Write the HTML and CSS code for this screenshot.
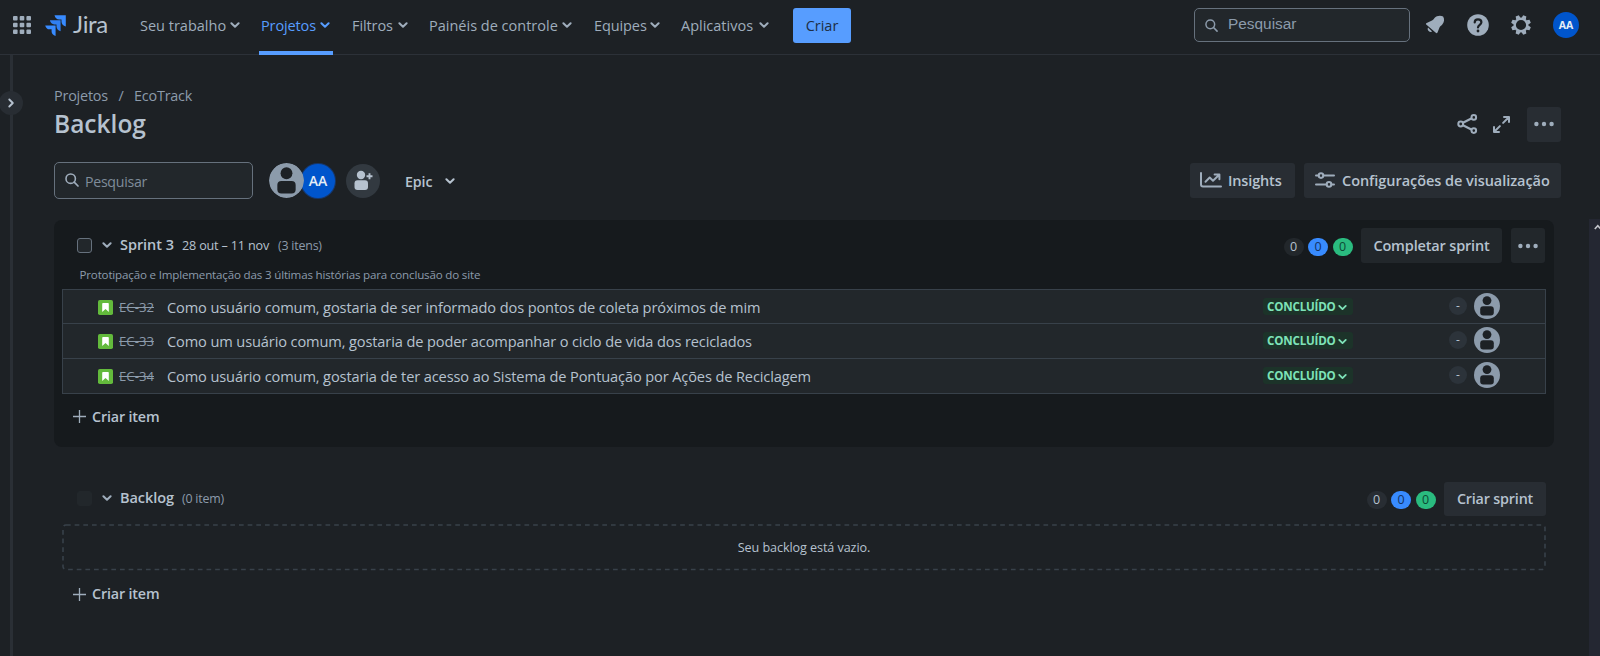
FILE: index.html
```
<!DOCTYPE html>
<html lang="pt-BR">
<head>
<meta charset="utf-8">
<title>Backlog - Jira</title>
<link rel="stylesheet" href="styles.css">
</head>
<body>
<svg width="0" height="0" class="defs" aria-hidden="true">
  <symbol id="chev" viewBox="0 0 10 10"><path d="M1.4 3.2 5 6.8l3.6-3.6" fill="none" stroke="currentColor" stroke-width="2" stroke-linecap="round" stroke-linejoin="round"/></symbol>
  <symbol id="search" viewBox="0 0 14 14"><circle cx="5.7" cy="5.7" r="4.7" fill="none" stroke="currentColor" stroke-width="1.6"/><path d="m9.2 9.2 3.8 3.8" stroke="currentColor" stroke-width="1.7" stroke-linecap="round"/></symbol>
  <symbol id="dots" viewBox="0 0 20 6"><circle cx="2.4" cy="3" r="2.2" fill="currentColor"/><circle cx="10" cy="3" r="2.2" fill="currentColor"/><circle cx="17.6" cy="3" r="2.2" fill="currentColor"/></symbol>
  <symbol id="plus" viewBox="0 0 13 13"><path d="M6.5 0v13M0 6.5h13" stroke="currentColor" stroke-width="1.3"/></symbol>
  <symbol id="person" viewBox="0 0 26 26"><circle cx="13" cy="13" r="13" fill="#8c9bab"/><circle cx="13" cy="7.6" r="4.4" fill="#1d2125"/><rect x="6.2" y="13.3" width="13.6" height="9.3" rx="3" fill="#1d2125"/></symbol>
  <symbol id="story" viewBox="0 0 15 15"><rect width="15" height="15" rx="1.8" fill="#63ba3c"/><path d="M4.2 3.8c0-.5.4-.8.8-.8h5c.5 0 .8.3.8.8V12L7.5 8.9 4.2 12z" fill="#fff"/></symbol>
</svg>

<header class="top">
  <svg class="apps" width="18" height="18" viewBox="0 0 18 18" fill="currentColor"><rect width="4.6" height="4.6" rx="1"/><rect x="6.7" width="4.6" height="4.6" rx="1"/><rect x="13.4" width="4.6" height="4.6" rx="1"/><rect y="6.7" width="4.6" height="4.6" rx="1"/><rect x="6.7" y="6.7" width="4.6" height="4.6" rx="1"/><rect x="13.4" y="6.7" width="4.6" height="4.6" rx="1"/><rect y="13.4" width="4.6" height="4.6" rx="1"/><rect x="6.7" y="13.4" width="4.6" height="4.6" rx="1"/><rect x="13.4" y="13.4" width="4.6" height="4.6" rx="1"/></svg>
  <svg class="mark" width="21" height="21" viewBox="0 0 21 21" fill="#388bff">
    <path d="M9.500.200h11.300v11.200c-2.600-.6-4.300-2.300-4.300-4.600V4.500h-2.300c-2.400 0-4.200-1.700-4.700-4.300z"/>
    <path d="M4.900 5.300h10.700v10.900c-2.500-.6-4.100-2.300-4.100-4.600V9.400H9.300c-2.200 0-3.900-1.600-4.400-4.100z" fill="#307ff2"/>
    <path d="M.200 10.400h10.400v10.500c-2.400-.6-4-2.300-4-4.500v-2.100H4.500c-2.200 0-3.800-1.500-4.300-3.900z"/>
  </svg>
  <span class="brand">Jira</span>
  <nav class="nav">
    <a class="n1"><span>Seu trabalho</span><svg class="chev"><use href="#chev"/></svg></a>
    <a class="n2 on"><span>Projetos</span><svg class="chev"><use href="#chev"/></svg></a>
    <a class="n3"><span>Filtros</span><svg class="chev"><use href="#chev"/></svg></a>
    <a class="n4"><span>Painéis de controle</span><svg class="chev"><use href="#chev"/></svg></a>
    <a class="n5"><span>Equipes</span><svg class="chev"><use href="#chev"/></svg></a>
    <a class="n6"><span>Aplicativos</span><svg class="chev"><use href="#chev"/></svg></a>
  </nav>
  <button class="create">Criar</button>
  <div class="tools">
    <div class="gsearch"><svg width="13" height="13"><use href="#search"/></svg><span>Pesquisar</span></div>
    <svg class="bell" width="20" height="20" viewBox="0 0 20 20"><path d="M1.200 9.600C.7 9 1 8.200 1.700 7.900L7 5.600c1-.4 1.800-1.500 2.500-2.500 2-2.500 6-3 8.600-1.600 1.600 2.300 1.200 6-1 8.200-1 .9-2.100 1.700-2.600 2.700l-2 5c-.3.800-1.100 1-1.700.4z" fill="currentColor"/><path d="M3 12.500c-.6 1.300-.3 2.600.6 3.500s2.300 1.200 3.500.6z" fill="currentColor"/></svg>
    <svg class="help" width="22" height="22" viewBox="0 0 22 22"><circle cx="11" cy="11" r="10.800" fill="currentColor"/><path d="M7.700 8.500C7.700 6.500 9.100 5.300 11 5.300s3.400 1.200 3.400 3c0 2.500-3.400 2.600-3.400 5.200" fill="none" stroke="#1d2125" stroke-width="2.200" stroke-linecap="round"/><circle cx="11" cy="17" r="1.400" fill="#1d2125"/></svg>
    <svg class="gear" width="20" height="20" viewBox="-10 -10 20 20"><circle r="6.300" fill="none" stroke="currentColor" stroke-width="2.400"/><g fill="currentColor"><path id="tooth" d="M-2.300-7-1.700-9.900h3.400L2.300-7z" transform="rotate(22.500)"/><use href="#tooth" transform="rotate(45)"/><use href="#tooth" transform="rotate(90)"/><use href="#tooth" transform="rotate(135)"/><use href="#tooth" transform="rotate(180)"/><use href="#tooth" transform="rotate(225)"/><use href="#tooth" transform="rotate(270)"/><use href="#tooth" transform="rotate(315)"/></g></svg>
    <span class="me">AA</span>
  </div>
</header>

<div class="body">
  <aside class="rail"><span class="expand"><svg width="10" height="10" viewBox="0 0 10 10"><path d="m3.300 1.500 3.500 3.500-3.500 3.500" fill="none" stroke="currentColor" stroke-width="1.900" stroke-linecap="round" stroke-linejoin="round"/></svg></span></aside>
  <main class="main">
    <div class="crumbs"><span>Projetos</span><i>/</i><span>EcoTrack</span></div>
    <div class="titlebar">
      <h1>Backlog</h1>
      <div class="acts">
        <svg width="21" height="20" viewBox="0 0 21 20" fill="none" stroke="currentColor" stroke-width="2"><path d="m6 8.700 8.300-4.300M6 11.300l8.300 4.300" stroke-width="2.200"/><circle cx="3.700" cy="10" r="2.400"/><circle cx="16.800" cy="3.400" r="2.300"/><circle cx="16.800" cy="16.600" r="2.300"/></svg>
        <svg class="full" width="19" height="19" viewBox="0 0 19 19" fill="none" stroke="currentColor" stroke-width="2" stroke-linecap="round" stroke-linejoin="round"><path d="M12 2h5v5M16.300 2.700l-5.200 5.200M2 12v5h5M2.700 16.300l5.200-5.200"/></svg>
        <button class="sq"><svg width="20" height="6"><use href="#dots"/></svg></button>
      </div>
    </div>
    <div class="filters">
      <div class="psearch"><svg width="14" height="14"><use href="#search"/></svg><span>Pesquisar</span></div>
      <svg class="av1" width="35" height="35"><use href="#person"/></svg>
      <span class="av2">AA</span>
      <span class="add"><svg width="22" height="22" viewBox="0 0 22 22" fill="#b6c2cf"><circle cx="9" cy="5" r="4.200"/><rect x="2.500" y="10.300" width="13.500" height="9.800" rx="3"/><path d="M17.500 3.300v6M14.500 6.300h6" stroke="#b6c2cf" stroke-width="1.900"/></svg></span>
      <span class="epic">Epic</span><svg class="chev"><use href="#chev"/></svg>
      <button class="btn insights"><svg width="22" height="16" viewBox="0 0 22 16" fill="none" stroke="currentColor" stroke-width="2" stroke-linecap="round" stroke-linejoin="round"><path d="M1 1v11.500a2 2 0 0 0 2 2h18"/><path d="m5.500 9.700 4.200-4.200 3.300 3.200 5.700-5.400M14.600 2.600h4.800v4.600"/></svg><span>Insights</span></button>
      <button class="btn config"><svg width="20" height="16" viewBox="0 0 20 16" fill="none" stroke="currentColor" stroke-width="2" stroke-linecap="round"><path d="M1 3.600h2.500M8.500 3.600H19M1 12.400h10.500M16.500 12.400H19"/><circle cx="6" cy="3.600" r="2.300"/><circle cx="14" cy="12.400" r="2.300"/></svg><span>Configurações de visualização</span></button>
    </div>

    <section class="panel">
      <div class="head">
        <i class="check"></i><svg class="chev"><use href="#chev"/></svg>
        <b>Sprint 3</b><span class="date">28 out – 11 nov</span><span class="count">(3 itens)</span>
        <div class="right"><span class="badge">0</span><span class="badge blue">0</span><span class="badge green">0</span>
        <button class="btn complete">Completar sprint</button><button class="sq"><svg width="20" height="6"><use href="#dots"/></svg></button></div>
      </div>
      <p class="goal">Prototipação e Implementação das 3 últimas histórias para conclusão do site</p>
      <ul class="list">
        <li><svg class="story"><use href="#story"/></svg><s>EC-32</s><span class="sum">Como usuário comum, gostaria de ser informado dos pontos de coleta próximos de mim</span><span class="status"><span>CONCLUÍDO</span><svg><use href="#chev"/></svg></span><em>-</em><svg class="pav"><use href="#person"/></svg></li>
        <li><svg class="story"><use href="#story"/></svg><s>EC-33</s><span class="sum">Como um usuário comum, gostaria de poder acompanhar o ciclo de vida dos reciclados</span><span class="status"><span>CONCLUÍDO</span><svg><use href="#chev"/></svg></span><em>-</em><svg class="pav"><use href="#person"/></svg></li>
        <li><svg class="story"><use href="#story"/></svg><s>EC-34</s><span class="sum">Como usuário comum, gostaria de ter acesso ao Sistema de Pontuação por Ações de Reciclagem</span><span class="status"><span>CONCLUÍDO</span><svg><use href="#chev"/></svg></span><em>-</em><svg class="pav"><use href="#person"/></svg></li>
      </ul>
      <div class="new"><svg width="13" height="13"><use href="#plus"/></svg><span>Criar item</span></div>
    </section>

    <section class="panel plain">
      <div class="head">
        <i class="check off"></i><svg class="chev"><use href="#chev"/></svg>
        <b>Backlog</b><span class="count">(0 item)</span>
        <div class="right"><span class="badge">0</span><span class="badge blue">0</span><span class="badge green">0</span>
        <button class="btn sprint">Criar sprint</button></div>
      </div>
      <div class="empty"><svg class="dash"><rect x="1" y="1" width="1482" height="44.500" rx="3" fill="none" stroke="#38414a" stroke-width="1.600" stroke-dasharray="4.700 3.950"/></svg><span>Seu backlog está vazio.</span></div>
      <div class="new"><svg width="13" height="13"><use href="#plus"/></svg><span>Criar item</span></div>
    </section>
  </main>
  <div class="scroll"><svg width="7" height="6" viewBox="0 0 7 6"><path d="m.8 5 3-3.300L6.800 5" fill="none" stroke="#c4c6cc" stroke-width="1.600"/></svg></div>
</div>
</body>
</html>
```
FILE: styles.css
```
*{box-sizing:border-box}
body{margin:0;width:1600px;height:656px;overflow:hidden;background:#1d2125;color:#b6c2cf;font-family:"Open Sans","Noto Sans",sans-serif;font-size:14.5px;line-height:20px;white-space:nowrap}
svg{flex:none;display:block}
button{border:0;padding:0;font:inherit;color:inherit;background:#282d33;border-radius:3px;flex:none}
.defs{position:absolute}
.chev{width:10px;height:10px}
.top{height:55px;display:flex;align-items:center;padding:0 0 4px 13px;border-bottom:1px solid #2c3138;color:#9fadbc}
.mark{margin-left:14px}
.apps{margin-top:-1px}
.brand{margin:-2px 0 0 7px;width:60px;font:400 24px/30px Lato,sans-serif;letter-spacing:-.3px;color:#b6c2cf}
.nav{display:flex;height:50px;font-weight:500}
.nav a{display:flex;align-items:center;justify-content:space-between;margin-left:7px}
.nav a>span{padding-top:1px}
.nav .n1{width:100px}
.nav .n2{width:74px;margin-left:19px;padding:0 3px 0 2px}
.nav .n3{width:56px;margin-left:19px}
.nav .n4{width:143px;margin-left:21px}
.nav .n5{width:66px;margin-left:22px}
.nav .n6{width:88px;margin-left:21px}
.nav .n3 span,.nav .n5 span{letter-spacing:-.1px}
.nav .on{color:#579dff;letter-spacing:-.12px;border-bottom:4px solid #579dff;height:55px;margin-bottom:-5px}
.nav .on>*{margin-top:-1px}
.create{width:58px;height:35px;margin-left:24px;padding-top:1px;background:#579dff;color:#1d2d45;font-weight:500}
.tools{display:flex;align-items:center;margin-left:343px}
.gsearch{width:216px;height:34px;display:flex;align-items:center;padding-left:10px;gap:10px;border:1px solid #66717d;border-radius:5px;background:#22272b;color:#8c9bab;font-family:"Liberation Sans",Arial,sans-serif;font-size:15.4px}
.gsearch span{margin-top:-2px}
.bell{margin-left:15px}
.help{margin-left:22px}
.gear{margin-left:22px}
.me{width:26px;height:26px;border-radius:50%;margin-left:22px;background:#0055cc;color:#e6edf5;font:700 10.500px/26px "Open Sans",sans-serif;text-align:center}
.body{display:flex;height:601px}
.rail{width:13px;flex:none;border-right:3px solid #2a2f35;position:relative}
.expand{position:absolute;left:-1px;top:36px;width:24px;height:24px;border-radius:50%;background:#282d33;display:grid;place-items:center}
.main{width:1508px;margin-left:41px;padding-top:31px;flex:none}
.crumbs{display:flex;font-size:14.400px;letter-spacing:-.2px;color:#8c9bab;height:20px}
.crumbs i{font-style:normal;width:26px;text-align:center}
.titlebar{display:flex;justify-content:space-between;height:36px;margin-top:1px}
h1{margin:0;font-size:24.500px;line-height:34px;font-weight:600}
.acts{display:flex;align-items:center;color:#9fadbc;gap:14px;margin:-2px 1px 0 0}
.acts .sq{margin-left:2px}
.sq{width:34px;height:35px;display:grid;place-items:center;color:#9fadbc}
.filters{display:flex;align-items:center;height:37px;margin-top:19px;font-weight:600}
.psearch{width:199px;height:37px;border:1px solid #66717d;border-radius:5px;background:#22272b;display:flex;align-items:center;padding-left:10px;gap:6px;font-weight:400;font-size:14.200px;letter-spacing:-.3px;color:#7f8c9a}
.psearch svg{color:#9fadbc;margin-top:-2px}
.psearch span{margin-top:3px}
.av1{margin-left:16px;z-index:1;border-radius:50%}
.av2{width:34px;height:34px;margin-left:-3px;border-radius:50%;background:#0055cc;color:#e6edf5;text-align:center;font-size:14px;line-height:34px;box-shadow:0 0 0 1px #16376b}
.add{width:34px;height:34px;margin-left:11px;border-radius:50%;background:#323940;display:grid;place-items:center}
.epic{width:41px;margin-left:25px;font-size:14.200px;letter-spacing:-.1px;margin-top:2px}
.epic+.chev{margin-left:-1px}
.insights{width:105px;height:35px;margin-left:735px}
.config{width:257px;height:35px;margin-left:9px}
.btn{display:flex;align-items:center;justify-content:center;font-weight:600;font-size:14.300px;letter-spacing:-.16px}
.insights,.config{justify-content:flex-start;padding-left:10px;gap:6px;letter-spacing:-.15px;font-size:14.500px}
.config{padding-left:11px;gap:7px;letter-spacing:-.05px}
.filters .btn svg{color:#9fadbc;margin-top:-2px}
.filters .btn span{margin-top:1px}
.panel{width:1500px;height:227px;margin-top:21px;padding:8px 8px 0;background:#161a1d;border-radius:8px}
.head{display:flex;align-items:center;height:35px;padding-left:15px}
.check{width:15px;height:15px;border:1.500px solid #66717d;border-radius:3px;background:#22272b}
.check.off{border-color:#22272b}
.head .chev{margin:-2px 8px 0 10px;color:#9fadbc}
.head b{font-weight:600;width:62px;letter-spacing:-.05px;margin-top:-1px}
.date{font-size:12.600px;letter-spacing:-.17px;width:96px;margin-top:1px}
.count{font-size:12.400px;letter-spacing:-.2px;color:#8c9bab;margin-top:1px}
.right{display:flex;align-items:center;margin:0 1px 0 auto}
.badge{width:20px;height:18px;margin:3px 4.500px 0 0;border-radius:9px;background:#22272b;font-size:12.500px;line-height:18px;text-align:center}
.blue{background:#388bff;color:#123263}
.green{background:#2abb7f;color:#0d4a35}
.complete{width:141px;margin-left:4px;height:35px;padding-top:1px;background:#22272b;font-size:14.500px}
.panel .sq{margin-left:9px;background:#22272b}
.goal{margin:0;padding-left:17.500px;height:26px;line-height:24px;font-size:11.600px;letter-spacing:-.18px;color:#8c9bab}
.list{list-style:none;margin:0;padding:0;width:1484px;border:1px solid #38414a;background:#22272b}
.list li{height:34.330px;display:flex;align-items:center;padding-left:35px;border-bottom:1px solid #38414a}
.list li:last-child{border:0}
.story{width:15px;height:15px;margin-top:1px}
.list s{font-size:13.200px;color:#8c9bab;width:48px;margin:1px 0 0 6px}
.sum{font-size:14.600px;letter-spacing:-.122px;width:1096px;margin-top:1px}
.status{width:90px;height:17px;border-radius:3px;background:#1c3329;color:#7ee2b8;display:flex;align-items:center;padding-left:4px;gap:2px;font-size:11.600px;font-weight:700;letter-spacing:-.2px}
.status span{width:69px}
.status svg{width:9px;height:9px;margin-top:1px}
.list em{width:18px;height:18px;line-height:17px;margin:-1px 7px 0 96px;border-radius:50%;background:#2c333a;text-align:center;font-style:normal;font-size:12px}
.pav{width:26px;height:26px;margin-top:-2px}
.new{display:flex;align-items:center;gap:6px;padding-left:11px;margin-top:13px;font-weight:600;font-size:14.300px;letter-spacing:-.15px;height:20px}
.new svg{color:#9fadbc}
.plain{height:auto;background:none;margin-top:26px}
.plain .badge:first-child{background:#282d33}
.plain .right{margin-right:0}
.sprint{width:102px;height:34px;margin-left:4px}
.empty{display:grid;place-items:center;width:1484px;height:47px;margin-top:8px;font-size:12.600px;letter-spacing:-.08px}
.empty>*{grid-area:1/1}
.empty>span{padding-top:1px}
.dash{width:1484px;height:47px}
.scroll{width:11px;margin:164px 0 0 27px;background:#242732;padding:5px 0 0 5px}
```
